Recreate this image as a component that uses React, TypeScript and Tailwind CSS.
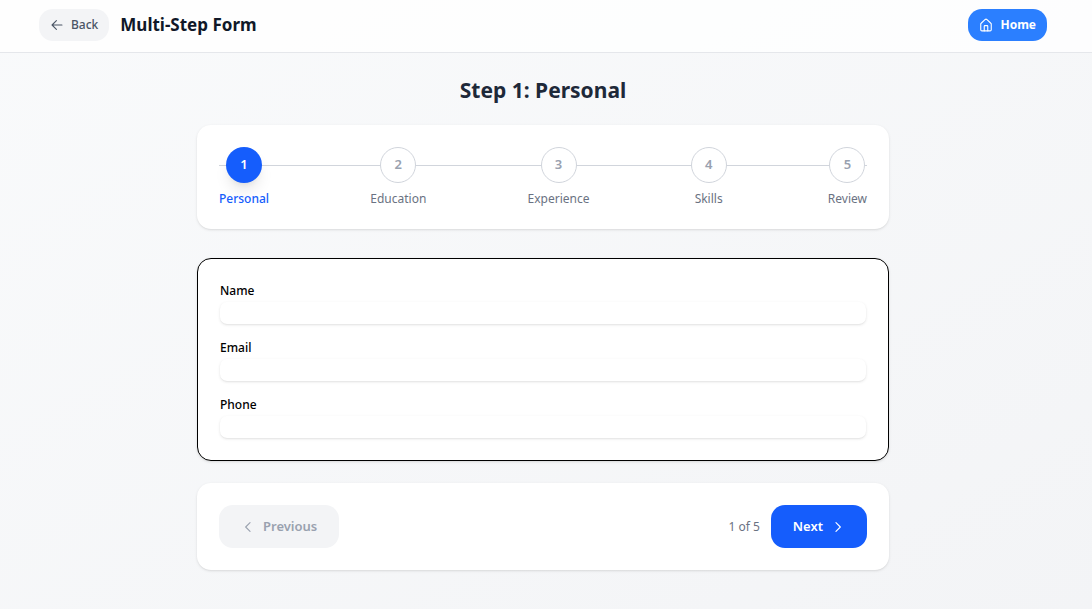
import { useState } from "react";
import type { ReactNode } from "react";

const steps = ["Personal", "Education", "Experience", "Skills", "Review"];

const fields = [
  { id: "name", label: "Name", type: "text" },
  { id: "email", label: "Email", type: "email" },
  { id: "phone", label: "Phone", type: "tel" },
];

function Icon({ children }: { children: ReactNode }) {
  return (
    <svg
      viewBox="0 0 24 24"
      fill="none"
      stroke="currentColor"
      strokeWidth="1.9"
      strokeLinecap="round"
      strokeLinejoin="round"
      aria-hidden="true"
      className="size-[14px] shrink-0"
    >
      {children}
    </svg>
  );
}

function Header() {
  return (
    <header className="border-b border-gray-200 bg-white/80 pr-[6px]">
      <div className="flex h-[52px] items-center justify-between px-[39px] pb-[2px]">
        <div className="flex items-center gap-[11px]">
          <button
            type="button"
            className="flex h-8 items-center gap-[7px] rounded-[14px] bg-gray-100 px-[11px] text-[12px] font-medium text-gray-600"
          >
            <Icon>
              <path d="M11 19.5 3.5 12 11 4.500M3.500 12H20.500" />
            </Icon>
            Back
          </button>
          <h1 className="text-[17px] font-bold text-gray-900">Multi-Step Form</h1>
        </div>
        <a
          href="#home"
          className="flex h-8 items-center gap-[7px] rounded-[14px] bg-[#2b7fff] px-[11px] text-[12px] font-bold text-white"
        >
          <Icon>
            <path d="M15 22v-8a1 1 0 0 0-1-1h-4a1 1 0 0 0-1 1v8" />
            <path d="M3 10.500a2 2 0 0 1 .7-1.500l7-6.500a2 2 0 0 1 2.600 0l7 6.500a2 2 0 0 1 .7 1.500V20a2 2 0 0 1-2 2H5a2 2 0 0 1-2-2z" />
          </Icon>
          Home
        </a>
      </div>
    </header>
  );
}

function Stepper({ current }: { current: number }) {
  return (
    <nav aria-label="Progress" className="rounded-[14px] bg-white p-[22px] shadow-sm">
      <ol className="relative flex items-start justify-between">
        <li aria-hidden="true" className="absolute inset-x-0 top-[18px] h-px bg-gray-300" />
        {steps.map((name, i) => (
          <li key={name} className="relative flex flex-col items-center gap-2">
            <span
              className={
                i === current
                  ? "flex size-9 items-center justify-center rounded-full bg-[#155dfc] text-[13px] font-semibold text-white shadow-lg"
                  : "flex size-9 items-center justify-center rounded-full border border-gray-300 bg-white text-[13px] font-semibold text-gray-400"
              }
            >
              {i + 1}
            </span>
            <span
              className={
                i === current
                  ? "text-[12px] leading-[16px] font-medium text-[#155dfc]"
                  : "text-[12px] leading-[16px] text-gray-500"
              }
            >
              {name}
            </span>
          </li>
        ))}
      </ol>
    </nav>
  );
}

export default function App() {
  const [current, setCurrent] = useState(0);

  return (
    <div className="min-h-screen bg-linear-to-br from-gray-50 to-gray-100 font-['Segoe_UI','Noto_Sans',sans-serif]">
      <Header />
      <main className="pt-[21px] pr-[6px] pb-[38px]">
        <div className="mx-auto max-w-[692px]">
          <h2 className="mb-[18px] text-center text-[21px] leading-[33px] font-bold text-gray-800">
            Step {current + 1}: {steps[current]}
          </h2>
          <Stepper current={current} />
          <form className="mt-[29px] flex flex-col gap-[14px] rounded-[14px] border border-black bg-white p-[22px] shadow-sm">
            {fields.map((field) => (
              <div key={field.id} className="flex flex-col gap-px">
                <label
                  htmlFor={field.id}
                  className="text-[12px] leading-[20px] font-medium text-black"
                >
                  {field.label}
                </label>
                <input
                  id={field.id}
                  type={field.type}
                  className="h-[22px] w-full rounded-[7px] bg-white px-2 text-[12px] shadow-sm outline-none"
                />
              </div>
            ))}
          </form>
          <div className="mt-[22px] flex items-center justify-between rounded-[14px] bg-white p-[22px] shadow-sm">
            <button
              type="button"
              disabled={current === 0}
              onClick={() => setCurrent(current - 1)}
              className="flex h-[43px] items-center gap-2 rounded-[14px] bg-gray-100 px-[22px] text-[13px] font-semibold text-gray-400"
            >
              <Icon>
                <path d="M15.500 19.500 8 12l7.500-7.500" />
              </Icon>
              Previous
            </button>
            <div className="flex items-center gap-[11px]">
              <span className="text-[12px] text-gray-500">
                {current + 1} of {steps.length}
              </span>
              <button
                type="button"
                onClick={() => setCurrent(Math.min(current + 1, steps.length - 1))}
                className="flex h-[43px] items-center gap-2 rounded-[14px] bg-[#155dfc] px-[22px] text-[13px] font-semibold text-white"
              >
                Next
                <Icon>
                  <path d="M8.500 4.500 16 12l-7.500 7.500" />
                </Icon>
              </button>
            </div>
          </div>
        </div>
      </main>
    </div>
  );
}
